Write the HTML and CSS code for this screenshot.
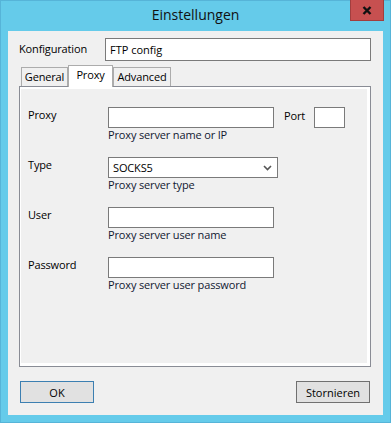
FILE: index.html
```html
<!DOCTYPE html>
<html lang="de">
<head>
  <meta charset="UTF-8">
  <title>Einstellungen</title>
  <link rel="stylesheet" href="styles.css">
</head>
<body>
  <div class="window">
    <div class="titlebar">
      <span class="title">Einstellungen</span>
      <button class="close-btn" title="Schließen">
        <svg width="10" height="9" viewBox="0 0 10 9">
          <path d="M1.5 1 L8.5 8 M8.5 1 L1.5 8" stroke="#111" stroke-width="2.4" fill="none"/>
        </svg>
      </button>
    </div>

    <div class="client">
      <div class="config-row">
        <label class="config-label">Konfiguration</label>
        <input type="text" class="textbox config-input" value="FTP config">
      </div>

      <div class="tabs">
        <div class="tab tab-general">General</div>
        <div class="tab tab-proxy active">Proxy</div>
        <div class="tab tab-advanced">Advanced</div>
      </div>

      <div class="panel">
        <div class="page">
          <div class="row">
            <label class="row-label">Proxy</label>
            <div class="field">
              <div class="field-line">
                <input type="text" class="textbox wide">
                <label class="port-label">Port</label>
                <input type="text" class="textbox port">
              </div>
              <div class="hint">Proxy server name or IP</div>
            </div>
          </div>

          <div class="row">
            <label class="row-label">Type</label>
            <div class="field">
              <div class="select">
                <span>SOCKS5</span>
                <svg width="9" height="6" viewBox="0 0 9 6">
                  <path d="M1 1 L4.5 4.5 L8 1" stroke="#555" stroke-width="1.6" fill="none"/>
                </svg>
              </div>
              <div class="hint">Proxy server type</div>
            </div>
          </div>

          <div class="row">
            <label class="row-label">User</label>
            <div class="field">
              <input type="text" class="textbox wide">
              <div class="hint">Proxy server user name</div>
            </div>
          </div>

          <div class="row">
            <label class="row-label">Password</label>
            <div class="field">
              <input type="password" class="textbox wide">
              <div class="hint">Proxy server user password</div>
            </div>
          </div>
        </div>
      </div>

      <div class="buttons">
        <button class="btn btn-default">OK</button>
        <button class="btn">Stornieren</button>
      </div>
    </div>
  </div>
</body>
</html>
```

FILE: styles.css
```css
body {
  margin: 0;
  font-family: "Segoe UI", "Open Sans", "Noto Sans", sans-serif;
  font-size: 11px;
  letter-spacing: -0.15px;
  color: #000;
}

.window {
  width: 391px;
  height: 423px;
  box-sizing: border-box;
  background-color: #65cbea;
  border: 1px solid #56b4d8;
  position: relative;
}

.titlebar {
  height: 30px;
  text-align: center;
}

.title {
  display: inline-block;
  font-size: 14px;
  letter-spacing: 0;
  line-height: 28px;
  color: #111;
}

.close-btn {
  position: absolute;
  top: -1px;
  right: 6px;
  width: 34px;
  height: 21px;
  padding: 0;
  border: 1px solid #a23e3e;
  border-top: none;
  background-color: #c75050;
  display: flex;
  align-items: center;
  justify-content: center;
}

.client {
  margin: 0 7px;
  height: 384px;
  box-sizing: border-box;
  background-color: #f0f0f0;
  padding-top: 7px;
}

.config-row {
  display: flex;
  align-items: center;
  padding-left: 11px;
}

.config-label {
  width: 86px;
  margin-top: -3px;
}

.textbox {
  box-sizing: border-box;
  border: 1px solid #7a7a7a;
  background: #fff;
  font: inherit;
  padding: 0 3px;
  margin: 0;
  outline: none;
}

.config-input {
  width: 266px;
  height: 23px;
  padding-left: 4px;
}

.tabs {
  display: flex;
  align-items: flex-end;
  margin: 4px 0 0 13px;
  height: 21px;
}

.tab {
  box-sizing: border-box;
  height: 19px;
  border: 1px solid #acacac;
  border-bottom: none;
  background-color: #f0f0f0;
  text-align: center;
  line-height: 18px;
}

.tab-general { width: 47px; }
.tab-proxy { width: 45px; }
.tab-advanced { width: 58px; }

.tab.active {
  height: 22px;
  margin-bottom: -1px;
  background-color: #fff;
  position: relative;
  z-index: 1;
  line-height: 17px;
}

.panel {
  margin-left: 11px;
  width: 352px;
  height: 281px;
  box-sizing: border-box;
  border: 1px solid #898c95;
  background-color: #fff;
  padding: 2px 3px 3px 1px;
}

.page {
  height: 100%;
  background-color: #f0f0f0;
  padding: 18px 0 0 7px;
  box-sizing: border-box;
}

.row {
  display: flex;
  height: 50px;
}

.row-label {
  width: 80px;
  line-height: 14px;
  margin-top: 1px;
}

.field-line {
  display: flex;
  align-items: center;
}

.textbox.wide {
  width: 166px;
  height: 21px;
  display: block;
}

.port-label {
  margin: -5px 0 0 10px;
  width: 30px;
}

.textbox.port {
  width: 31px;
  height: 21px;
}

.select {
  box-sizing: border-box;
  width: 170px;
  height: 21px;
  border: 1px solid #7a7a7a;
  background: #fff;
  display: flex;
  align-items: center;
  justify-content: space-between;
  padding: 0 5px 0 4px;
}

.hint {
  line-height: 14px;
  color: #101830;
}

.buttons {
  display: flex;
  justify-content: space-between;
  padding: 0 13px 0 12px;
  margin-top: 14px;
}

.btn {
  width: 74px;
  height: 22px;
  box-sizing: border-box;
  border: 1px solid #707070;
  background-color: #e1e1e1;
  font: inherit;
  color: #000;
  padding: 0;
}

.btn-default {
  border-color: #3c7fb1;
}
```
